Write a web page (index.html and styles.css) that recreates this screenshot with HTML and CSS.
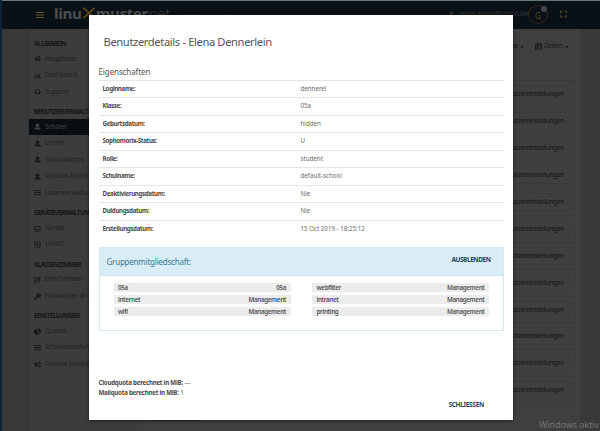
FILE: index.html
```
<!DOCTYPE html>
<html lang="de">
<head>
<meta charset="utf-8">
<title>Benutzerdetails</title>
<link rel="stylesheet" href="styles.css">
</head>
<body>
<svg class="defs" aria-hidden="true">
  <symbol id="home" viewBox="0 0 16 16"><path d="M8 1 0 8l1 1 7-6 7 6 1-1-3-3V2h-2v1zM8 5 3 9v5h4v-4h2v4h4V9z"/></symbol>
  <symbol id="chart" viewBox="0 0 16 16"><path d="M0 1h1v13h15v1H0zM3 8h2v5H3zm3-3h2v8H6zm3 2h2v6H9zm3-4h2v10h-2z"/></symbol>
  <symbol id="support" viewBox="0 0 16 16"><path d="M2 7a6 5 0 0 1 12 0l1 5-3 2-2-1V8h3a5 4 0 0 0-10 0h3v5l-2 1-3-2zM8 13h4v2H8z"/></symbol>
  <symbol id="user" viewBox="0 0 16 16"><circle cx="8" cy="5" r="4"/><path d="M1 15v-3l4-2.5h6l4 2.5v3z"/></symbol>
  <symbol id="list" viewBox="0 0 16 16"><path d="M0 2h3v3H0zm5 0h11v2H5zM0 7h3v3H0zm5 0h11v2H5zm-5 5h3v3H0zm5 0h11v2H5z"/></symbol>
  <symbol id="table" viewBox="0 0 16 16"><path fill-rule="evenodd" d="M0 1h16v14H0zm2 3v2h3V4zm5 0v2h7V4zM2 8v2h3V8zm5 0v2h7V8zm-5 3v2h3v-2zm5 0v2h7v-2z"/></symbol>
  <symbol id="laptop" viewBox="0 0 16 16"><path fill-rule="evenodd" d="M1 2h14v10H1zm2 2v6h10V4zM0 13h16v2H0z"/></symbol>
  <symbol id="linbo" viewBox="0 0 16 16"><path fill-rule="evenodd" d="M1 1h14v14H1zm2 2v10h10V3zm4 1h2v4h3l-4 4-4-4h3z"/></symbol>
  <symbol id="edit" viewBox="0 0 16 16"><path d="M1 3h8L7 5H3v8h8v-3l2-2v7H1zM6 8l7-7 3 3-7 7H6z"/></symbol>
  <symbol id="key" viewBox="0 0 16 16"><path fill-rule="evenodd" d="M10 1a5 5 0 1 1-2 9L5 12v2H3v2H0v-3l6-6a5 5 0 0 1 4-6zm1 2v2h2V3z"/></symbol>
  <symbol id="pie" viewBox="0 0 16 16"><path d="M7 2v7l5 5A7 7 0 1 1 7 2zm2-1a7 7 0 0 1 7 7H9zm1 8h6l-2 4z"/></symbol>
  <symbol id="bars" viewBox="0 0 16 16"><path d="M0 2h16v2H0zm0 5h16v2H0zm0 5h16v2H0z"/></symbol>
  <symbol id="cogs" viewBox="0 0 16 16"><g fill="none" stroke="currentColor"><circle cx="5" cy="8" r="3.4" stroke-width="3"/><circle cx="13" cy="4" r="1.8" stroke-width="2"/><circle cx="13" cy="12" r="1.8" stroke-width="2"/></g></symbol>
  <symbol id="expand" viewBox="0 0 16 16"><path d="M0 0h6v3H3v3H0zm10 0h6v6h-3V3h-3zM0 10h3v3h3v3H0zm13 0h3v6h-6v-3h3z"/></symbol>
</svg>
<header class="topbar">
  <svg class="burger"><use href="#bars"/></svg>
  <div class="logo"><b>linu</b><svg class="logo-x" viewBox="0 0 14 13"><path d="M1 1l12 11M13 1 1 12"/></svg><b>muster</b><span>net</span></div>
  <div class="school">Schulverwaltung</div>
  <div class="account"><svg><use href="#user"/></svg>global-admin@school.lan</div>
  <div class="avatar">G<i></i></div>
  <svg class="expand"><use href="#expand"/></svg>
</header>
<div class="page">
  <nav class="sidebar">
    <h3>ALLGEMEIN</h3>
    <a><svg><use href="#home"/></svg>Hauptseite</a>
    <a><svg><use href="#chart"/></svg>Dashboard</a>
    <a><svg><use href="#support"/></svg>Support</a>
    <h3>BENUTZERVERWALTUNG</h3>
    <a class="active"><svg><use href="#user"/></svg>Schüler</a>
    <a><svg><use href="#user"/></svg>Lehrer</a>
    <a><svg><use href="#user"/></svg>Schul-Admins</a>
    <a><svg><use href="#user"/></svg>Globale-Admins</a>
    <a><svg><use href="#list"/></svg>Listenverwaltung</a>
    <h3>GERÄTEVERWALTUNG</h3>
    <a><svg><use href="#laptop"/></svg>Geräte</a>
    <a><svg><use href="#linbo"/></svg>LINBO</a>
    <h3>KLASSENZIMMER</h3>
    <a><svg><use href="#edit"/></svg>Einschreiben</a>
    <a><svg><use href="#key"/></svg>Passwörter drucken</a>
    <h3>EINSTELLUNGEN</h3>
    <a><svg><use href="#pie"/></svg>Quotas</a>
    <a><svg><use href="#bars"/></svg>Schuleinstellungen</a>
    <a><svg><use href="#cogs"/></svg>Globale Einstellungen</a>
  </nav>
  <main class="content">
    <div class="tools"><span>Name <i></i></span><span><svg><use href="#table"/></svg>Zeilen <i></i></span></div>
    <div class="row"><span>Benutzereinstellungen</span></div>
    <div class="row"><span>Benutzereinstellungen</span></div>
    <div class="row"><span>Benutzereinstellungen</span></div>
    <div class="row"><span>Benutzereinstellungen</span></div>
    <div class="row"><span>Benutzereinstellungen</span></div>
    <div class="row"><span>Benutzereinstellungen</span></div>
    <div class="row"><span>Benutzereinstellungen</span></div>
    <div class="row"><span>Benutzereinstellungen</span></div>
    <div class="row"><span>Benutzereinstellungen</span></div>
    <div class="row"><span>Benutzereinstellungen</span></div>
    <div class="row"><span>Benutzereinstellungen</span></div>
    <div class="row"><span>Benutzereinstellungen</span></div>
    <div class="selected">Alle auswählen</div>
  </main>
</div>
<div class="watermark">Windows aktiv</div>
<section class="modal">
  <h1>Benutzerdetails - Elena Dennerlein</h1>
  <h2>Eigenschaften</h2>
  <dl class="props">
    <dt>Loginname:</dt><dd>dennerel</dd>
    <dt>Klasse:</dt><dd>05a</dd>
    <dt>Geburtsdatum:</dt><dd>hidden</dd>
    <dt>Sophomorix-Status:</dt><dd>U</dd>
    <dt>Rolle:</dt><dd>student</dd>
    <dt>Schulname:</dt><dd>default-school</dd>
    <dt>Deaktivierungsdatum:</dt><dd>Nie</dd>
    <dt>Duldungsdatum:</dt><dd>Nie</dd>
    <dt>Erstellungsdatum:</dt><dd>15 Oct 2019 - 18:25:12</dd>
  </dl>
  <div class="groups">
    <div class="groups-head"><span>Gruppenmitgliedschaft:</span><b>AUSBLENDEN</b></div>
    <div class="groups-body">
      <div><span>05a</span><span>05a</span></div><div><span>webfilter</span><span>Management</span></div>
      <div><span>internet</span><span>Management</span></div><div><span>intranet</span><span>Management</span></div>
      <div><span>wifi</span><span>Management</span></div><div><span>printing</span><span>Management</span></div>
    </div>
  </div>
  <div class="quota">
    <p><b>Cloudquota berechnet in MiB:</b> ---</p>
    <p><b>Mailquota berechnet in MiB:</b> 1</p>
  </div>
  <div class="actions">SCHLIESSEN</div>
</section>
</body>
</html>
```
FILE: styles.css
```
* { box-sizing: border-box; margin: 0; padding: 0; }
body {
  width: 600px; height: 431px; overflow: hidden; position: relative;
  background: #393939; border-left: 2px solid #0b233b;
  font: 6.5px/1 "Noto Sans", sans-serif; color: #555; white-space: nowrap;
}
svg { fill: currentColor; flex: none; }
.defs { position: absolute; width: 0; height: 0; }

.topbar { height: 29px; border-top: 1px solid #6a7578; background: #0a1116; display: flex; align-items: center; position: relative; }
.burger { width: 8px; height: 8px; margin-left: 34px; color: #66501c; }
.logo { display: flex; align-items: center; margin-left: 10px; font: 15px/20px "Open Sans", sans-serif; color: #4c5052; height: 24px; padding-bottom: 4px; letter-spacing: -.3px; }
.logo b { font-weight: 700; }
.logo span { color: #2b3033; }
.logo-x { width: 14px; height: 12px; fill: none; stroke: #5e4817; stroke-width: 2; }
.school { margin-left: 18px; padding-top: 3px; font-size: 7px; color: #303030; }
.account { position: absolute; left: 446px; top: 10px; display: flex; gap: 3px; font-size: 6.5px; letter-spacing: -.3px; color: #303436; }
.account svg { width: 7px; height: 7px; }
.avatar { position: absolute; left: 526px; top: 4px; width: 20px; height: 19px; border: 1px solid #302817; border-radius: 50%; color: #5e4b1c; font-size: 8px; line-height: 20px; text-align: center; }
.avatar i { position: absolute; right: 0; top: 0; width: 6px; height: 6px; border-radius: 50%; background: #41474a; }
.expand { position: absolute; left: 558px; top: 9px; width: 7px; height: 8px; color: #453b1c; }

.page { display: flex; height: 402px; }
.sidebar { width: 115px; margin-left: 26px; padding-top: 3px; background: #3c3c3c; border-left: 1px solid #353535; overflow: hidden; }
.sidebar h3 { height: 18.6px; padding: 8px 0 0 5px; font: 700 6.4px/8px "Noto Sans", sans-serif; letter-spacing: -.55px; color: #161616; }
.sidebar a { height: 16.5px; display: flex; align-items: center; gap: 4px; padding-left: 5px; font-size: 6.5px; color: #202020; letter-spacing: -.15px; }
.sidebar a svg { width: 7px; height: 7px; color: #171717; }
.sidebar .active { background: #090e13; color: #41464a; }
.sidebar .active svg { color: #3d4245; }

.content { flex: 1; margin-right: 18px; background: #3f3f3f; border-right: 1px solid #363636; display: flex; flex-direction: column; }
.tools { height: 52px; border-bottom: 1px solid #383838; margin-right: 6px; padding: 13px 6px 0 0; display: flex; justify-content: flex-end; gap: 11px; font-size: 6.7px; color: #181818; }
.tools span { display: flex; gap: 2px; height: 9px; align-items: center; }
.tools svg { width: 7px; height: 7px; }
.tools i { border: 2px solid transparent; border-top-color: #181818; border-bottom-width: 0; }
.row { height: 26.95px; border-bottom: 1px solid #3a3a3a; margin-right: 6px; padding: 4px 6px 4px 0; display: flex; justify-content: flex-end; }
.row span { border: 1px solid #3a3a3a; padding: 0 4px 0 8px; line-height: 16px; font-size: 6.5px; font-weight: 500; letter-spacing: -.35px; color: #191919; }
.selected { padding: 11px 0 0 6px; font-size: 7px; color: #111; }
.watermark { position: absolute; left: 537px; top: 420px; font-size: 9px; letter-spacing: -.05px; color: #737373; }

.modal { position: absolute; left: 87px; top: 15px; width: 424px; height: 405px; padding: 0 9.5px; background: #fff; box-shadow: 0 1px 3px #0008; display: flex; flex-direction: column; }
.modal h1 { height: 50px; padding: 19.5px 0 0 5px; font: 400 11.2px/13px "Noto Sans", sans-serif; letter-spacing: -.38px; color: #555; }
.modal h2 { height: 15px; font: 400 8px/13px "Noto Sans", sans-serif; letter-spacing: -.1px; color: #555; }
.props { display: grid; grid-template-columns: 202px 1fr; grid-auto-rows: 17.45px; line-height: 16.4px; }
.props dt, .props dd { border-top: 1px solid #e5e5e5; }
.props dt { padding-left: 4px; font-weight: 700; font-size: 6.2px; letter-spacing: -.35px; color: #4a4a4a; }
.props dd { font-size: 6.2px; color: #6a6a6a; }
.groups { height: 84px; margin-top: 10px; border: 1px solid #d5e8f0; }
.groups-head { height: 28px; background: #d9edf7; border-bottom: 1px solid #cce6ef; display: flex; justify-content: space-between; padding: 0 12px 0 7px; color: #357b96; font-size: 8px; line-height: 28px; letter-spacing: -.22px; }
.groups-head b { font-size: 6.5px; line-height: 23px; color: #24465b; letter-spacing: -.45px; }
.groups-body { display: grid; grid-template-columns: 177px 177px; column-gap: 21.5px; row-gap: 3px; padding: 7px 0 0 14px; }
.groups-body div { height: 9px; background: #ececec; display: flex; justify-content: space-between; padding: 0 4.5px; font: 600 6.3px/9px "Noto Sans", sans-serif; letter-spacing: -.36px; color: #555; }
.quota { margin-top: 47px; line-height: 9.8px; font-size: 6.2px; }
.quota b { letter-spacing: -.26px; color: #4a4a4a; }
.actions { margin: 4px 0 0 350px; font-size: 6.5px; font-weight: 700; letter-spacing: -.32px; color: #24465b; }
```
